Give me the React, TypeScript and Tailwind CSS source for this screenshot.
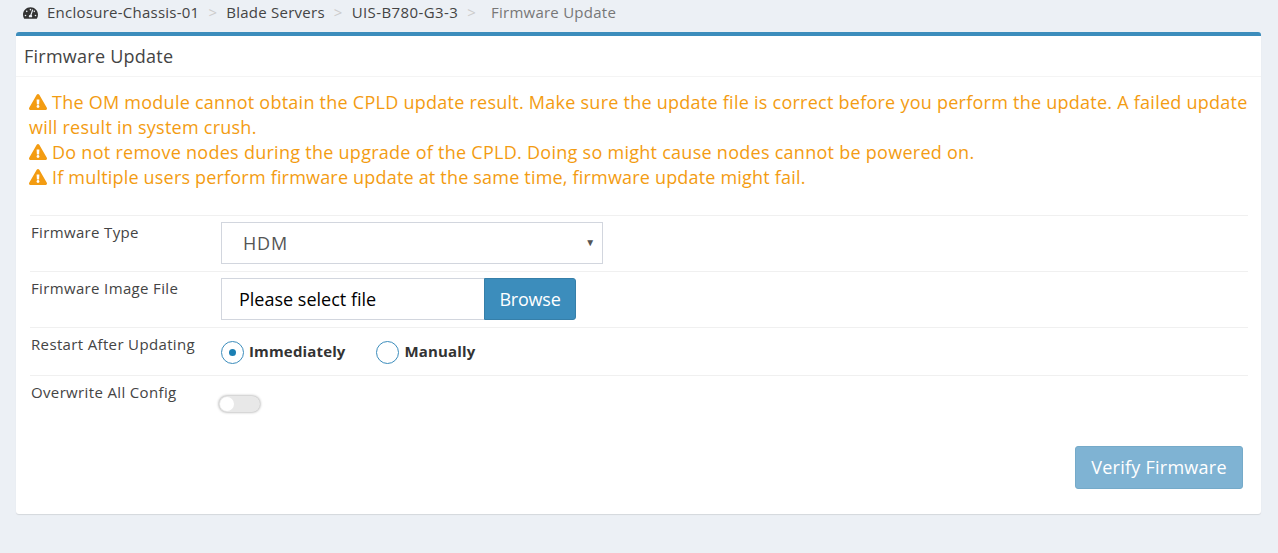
import { FaTachometerAlt, FaExclamationTriangle } from "react-icons/fa";

function Warn({ children, track }: { children: React.ReactNode; track: string }) {
  return (
    <div className={track}>
      <FaExclamationTriangle className="inline-block w-[18px] h-[16px] mr-[5px] align-[-1px]" />
      {children}
    </div>
  );
}

function Row({ label, children, h }: { label: string; children: React.ReactNode; h: string }) {
  return (
    <div className={`flex border-t border-[#f0f0f0] ${h}`}>
      <div className="w-[191px] pl-[1px] pt-[6px] text-[15px] leading-[20px] tracking-[0.35px] text-[#444]">{label}</div>
      <div className="flex-1">{children}</div>
    </div>
  );
}

export default function App() {
  return (
    <div className="min-h-[553px] bg-[#ecf0f5] px-[16px] pr-[17px] font-['Open_Sans',sans-serif]">
      <div className="h-[32px] flex items-start pt-[2px] pl-[7px] text-[15px] leading-[20px] text-[#444] tracking-[0.25px]">
        <FaTachometerAlt className="w-[15px] h-[14px] mt-[4px] mr-[9px] text-[#333]" />
        <span>Enclosure-Chassis-01</span>
        <span className="text-[#ccc] mx-[9px]">&gt;</span>
        <span>Blade Servers</span>
        <span className="text-[#ccc] mx-[9px]">&gt;</span>
        <span className="tracking-[0.4px]">UIS-B780-G3-3</span>
        <span className="text-[#ccc] ml-[9px] mr-[15px]">&gt;</span>
        <span className="text-[#777]">Firmware Update</span>
      </div>
      <div className="h-[482px] bg-white rounded-[3px] border-t-[4px] border-[#3c8dbc] shadow-[0_1px_1px_rgba(0,0,0,0.1)]">
        <div className="h-[41px] border-b border-[#f4f4f4] pl-[8px] pt-[8px] text-[18px] leading-[25px] tracking-[0.25px] text-[#444]">Firmware Update</div>
        <div className="text-[#f39c12] text-[18px] leading-[25px] pt-[13px] pl-[13px] pr-[10px]">
          <Warn track="tracking-[0.25px]">The OM module cannot obtain the CPLD update result. Make sure the update file is correct before you perform the update. A failed update will result in system crush.</Warn>
          <Warn track="tracking-[0.27px]">Do not remove nodes during the upgrade of the CPLD. Doing so might cause nodes cannot be powered on.</Warn>
          <Warn track="tracking-[0.19px]">If multiple users perform firmware update at the same time, firmware update might fail.</Warn>
        </div>
        <div className="mt-[25px] mx-[13px] pl-[1px]">
          <Row label="Firmware Type" h="h-[56px]">
            <div className="mt-[6px] w-[382px] h-[42px] border border-[#d2d6de] flex items-center justify-between pl-[21px] pr-[6px] text-[18px] tracking-[0.8px] text-[#555]">
              <span>HDM</span>
              <span className="text-[10px] text-[#555] -mt-[2px]">▼</span>
            </div>
          </Row>
          <Row label="Firmware Image File" h="h-[56px]">
            <div className="mt-[6px] flex">
              <div className="w-[263px] h-[42px] border border-[#d2d6de] border-r-0 flex items-center pl-[17px] text-[18px] text-black">Please select file</div>
              <div className="w-[92px] h-[42px] bg-[#3c8dbc] border border-[#367fa9] rounded-r-[3px] flex items-center justify-center text-[18px] tracking-[-0.2px] text-white">Browse</div>
            </div>
          </Row>
          <Row label="Restart After Updating" h="h-[48px]">
            <div className="flex items-center mt-[12px] h-[24px] text-[15px] tracking-[0.15px] font-bold text-[#333]">
              <span className="w-[23px] h-[23px] rounded-full border border-[#3c8dbc] flex items-center justify-center mr-[5px]">
                <span className="w-[7px] h-[7px] rounded-full bg-[#1b7fb3]" />
              </span>
              <span className="mr-[30px] -mt-[2px]">Immediately</span>
              <span className="w-[23px] h-[23px] rounded-full border border-[#3c8dbc] mr-[6px]" />
              <span className="-mt-[2px]">Manually</span>
            </div>
          </Row>
          <Row label="Overwrite All Config" h="h-[50px]">
            <div className="mt-[20px] -ml-[2px] w-[41px] h-[16px] rounded-full bg-[#e8e8e8] shadow-[0_0_3px_rgba(0,0,0,0.45)] flex items-center">
              <span className="ml-[1px] w-[14px] h-[14px] rounded-full bg-white" />
            </div>
          </Row>
        </div>
        <div className="flex justify-end pr-[18px] mt-[21px]">
          <div className="w-[168px] h-[43px] bg-[#7fb3d3] border border-[#75aac9] rounded-[3px] flex items-center justify-center text-[18px] tracking-[0.25px] text-white">Verify Firmware</div>
        </div>
      </div>
    </div>
  );
}
